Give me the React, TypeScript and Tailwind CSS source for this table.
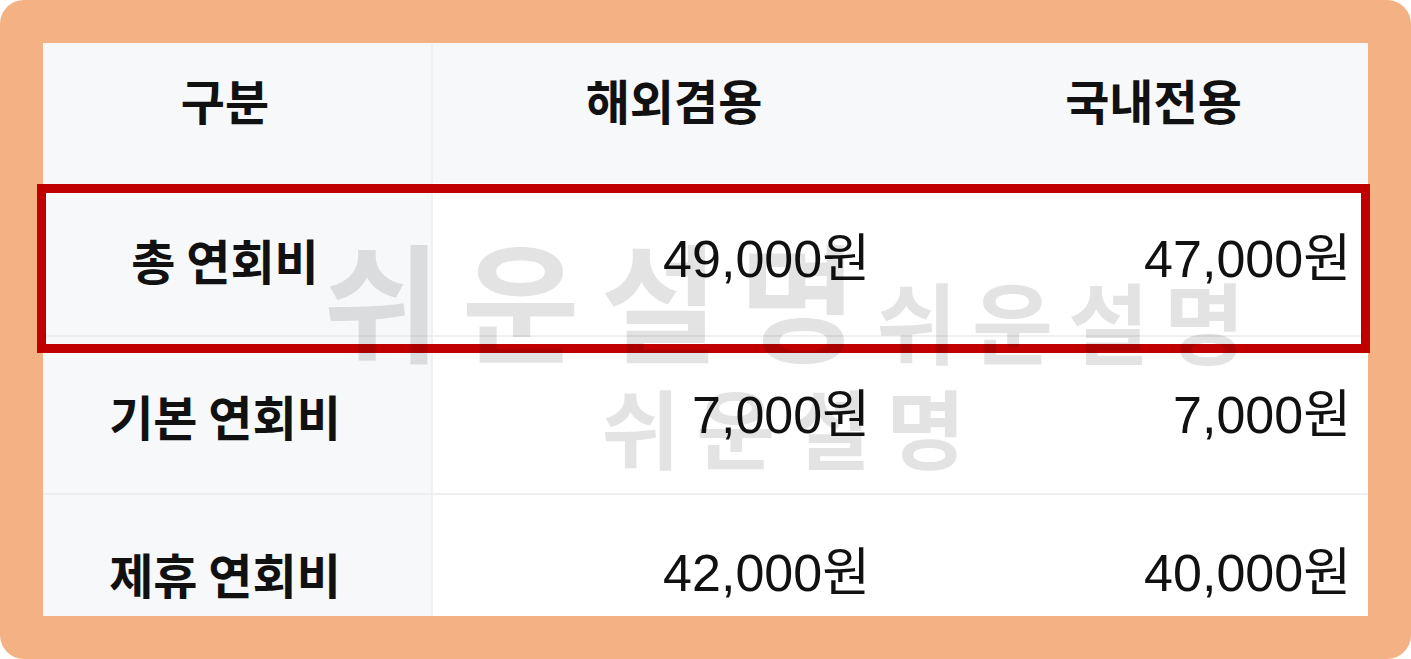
const rows = [
  { label: "총 연회비", overseas: "49,000원", domestic: "47,000원", h: "h-[154px]" },
  { label: "기본 연회비", overseas: "7,000원", domestic: "7,000원", h: "h-[158px]" },
  { label: "제휴 연회비", overseas: "42,000원", domestic: "40,000원", h: "h-[157px]" },
];

export default function App() {
  return (
    <div className="bg-white">
      <div className="relative w-[1411px] h-[659px] rounded-[24px] bg-[#F4B183] p-[43px] font-['Noto_Sans_CJK_KR',sans-serif] text-[#111]">
        {/* table */}
        <div className="h-full overflow-hidden bg-white">
          <div className="grid grid-cols-[390px_482px_453px] h-[140px] bg-[#f7f8fa] text-[48px] font-bold">
            <div className="flex items-center justify-center pr-6 pb-7 border-r-2 border-[#eef0f2]">구분</div>
            <div className="flex items-center justify-center pb-7">해외겸용</div>
            <div className="flex items-center justify-center pl-6 pb-7">국내전용</div>
          </div>

          {rows.map((r) => (
            <div
              key={r.label}
              className={`grid grid-cols-[390px_482px_453px] ${r.h} border-b-2 border-[#efeff1]`}
            >
              <div className="flex items-center justify-center pr-6 bg-[#f7f8fa] border-r-2 border-[#eef0f2] text-[48px] font-bold">
                {r.label}
              </div>
              <div className="flex items-center justify-end pr-[45px] text-[52px] font-['Liberation_Sans','Noto_Sans_CJK_KR',sans-serif]">
                {r.overseas}
              </div>
              <div className="flex items-center justify-end pr-[17px] text-[52px] font-['Liberation_Sans','Noto_Sans_CJK_KR',sans-serif]">
                {r.domestic}
              </div>
            </div>
          ))}
        </div>

        {/* highlight box */}
        <div className="absolute left-[37px] top-[184px] w-[1333px] h-[169px] border-[9px] border-[#c00000]" />

        {/* watermarks */}
        <div className="pointer-events-none absolute left-[323px] top-[234px] text-[128px] leading-none font-bold tracking-[21px] text-black/[0.11]">
          쉬운설명
        </div>
        <div className="pointer-events-none absolute left-[876px] top-[275px] text-[88px] leading-none font-bold tracking-[15px] text-black/[0.11]">
          쉬운설명
        </div>
        <div className="pointer-events-none absolute left-[601px] top-[383px] text-[86px] leading-none font-bold tracking-[16px] text-black/[0.11]">
          쉬운설명
        </div>
      </div>
    </div>
  );
}
